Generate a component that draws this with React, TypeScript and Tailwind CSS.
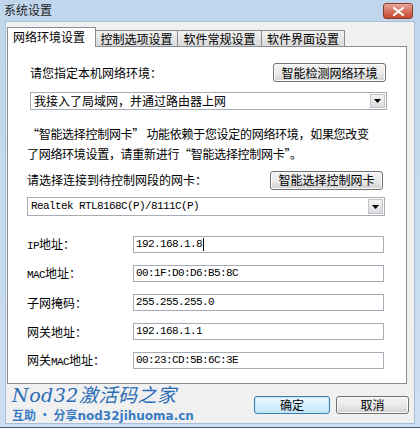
import React from 'react';

const cjk = "font-['Noto_Sans_CJK_SC','Noto_Sans',sans-serif]";
const mono = "font-['Liberation_Mono','Noto_Sans_CJK_SC',monospace]";

function WinButton({ children, className = '', primary = false }: { children: React.ReactNode; className?: string; primary?: boolean }) {
  return (
    <div
      className={`flex items-center justify-center rounded-[3px] border text-[12px] leading-none text-black ${
        primary
          ? 'border-[#3c7fb1] bg-gradient-to-b from-[#eaf6fd] via-[#d9f0fc] to-[#bee6fd] shadow-[inset_0_0_0_1px_#c4e5f6]'
          : 'border-[#707070] bg-gradient-to-b from-[#f2f2f2] via-[#ebebeb] to-[#d0d0d0] shadow-[inset_0_0_0_1px_#fcfcfc]'
      } ${className}`}
    >
      {children}
    </div>
  );
}

function Combo({ text, className = '', textClass = '' }: { text: string; className?: string; textClass?: string }) {
  return (
    <div className={`flex items-stretch border border-[#a5acb5] bg-white ${className}`}>
      <div className={`flex flex-1 items-center pl-[3px] whitespace-nowrap text-black ${textClass}`}>{text}</div>
      <div className="m-[1px] flex w-[15px] items-center justify-center border border-[#bfc4cb] bg-gradient-to-b from-[#f4f4f4] to-[#dcdcdc]">
        <svg width="7" height="4" viewBox="0 0 7 4">
          <path d="M0 0h7L3.5 4z" fill="#000" />
        </svg>
      </div>
    </div>
  );
}

function Field({ label, value, caret = false }: { label: React.ReactNode; value: string; caret?: boolean }) {
  return (
    <div className="flex h-[17px] items-center">
      <div className="w-[106px] text-[12px] leading-none text-black">{label}</div>
      <div className={`flex h-[17px] w-[251px] items-center border border-[#a5acb5] bg-white pl-[2px] text-[11px] tracking-[-0.6px] text-black ${mono}`}>
        {value}
        {caret && <span className="ml-[1px] inline-block h-[13px] w-[1px] bg-black" />}
      </div>
    </div>
  );
}

const Lat = ({ children }: { children: React.ReactNode }) => (
  <span className={`text-[11px] tracking-[-0.6px] ${mono}`}>{children}</span>
);

const tabs = [
  { label: '网络环境设置', w: 'w-[89px]' },
  { label: '控制选项设置', w: 'w-[82px]' },
  { label: '软件常规设置', w: 'w-[84px]' },
  { label: '软件界面设置', w: 'w-[83px]' },
];

export default function App() {
  return (
    <div className={`flex h-[430px] w-[420px] flex-col bg-gradient-to-b from-[#c0d6ec] to-[#cde0f2] ${cjk}`}>
      <div className="flex h-[22px] shrink-0 items-start justify-between pl-[4px] pr-[7px]">
        <span className="mt-[4px] text-[12px] leading-none text-[#1e1e1e]">系统设置</span>
        <div className="mt-[3px] flex h-[16px] w-[30px] items-center justify-center rounded-[3px] border border-[#8d3a2d] bg-gradient-to-b from-[#e6a89b] via-[#d5735f] to-[#c4472f]">
          <svg width="11" height="9" viewBox="0 0 11 9">
            <path d="M1 1l9 7M10 1L1 8" stroke="#fff" strokeWidth="2.2" strokeLinecap="round" />
          </svg>
        </div>
      </div>

      <div className="mx-[6px] mb-[4px] flex flex-1 flex-col bg-[#f0f0f0] shadow-[0_0_0_1px_#a9bed6]">
        <div className="ml-[1px] flex h-[24px] shrink-0 items-end pt-[5px]">
          {tabs.map((t, i) =>
            i === 0 ? (
              <div
                key={t.label}
                className={`relative z-10 -mb-[1px] flex h-[20px] ${t.w} items-start border border-b-0 border-[#898c95] bg-white pl-[5px] pt-[3px] text-[12px] leading-none text-black`}
              >
                {t.label}
              </div>
            ) : (
              <div
                key={t.label}
                className={`flex h-[16px] ${t.w} items-center justify-center border border-b-0 border-l-0 border-[#898c95] bg-gradient-to-b from-[#f2f2f2] to-[#dadada] text-[12px] leading-none text-black`}
              >
                {t.label}
              </div>
            )
          )}
        </div>

        <div className="ml-[1px] flex h-[338px] w-[400px] flex-col border border-[#898c95] bg-white pl-[19px] text-[12px] text-black">
          <div className="ml-[3px] mt-[16px] flex h-[19px] items-center justify-between pr-[20px]">
            <span className="leading-none">请您指定本机网络环境：</span>
            <WinButton className="h-[19px] w-[113px]">智能检测网络环境</WinButton>
          </div>
          <Combo text="我接入了局域网，并通过路由器上网" className="ml-[3px] mt-[10px] h-[18px] w-[357px]" textClass="text-[12px]" />

          <div className="mt-[14px] flex flex-col whitespace-nowrap text-[12px] tracking-[-0.3px]">
            <span className="h-[20px] leading-[20px]">“智能选择控制网卡” 功能依赖于您设定的网络环境，如果您改变</span>
            <span className="h-[20px] leading-[20px]">了网络环境设置，请重新进行“智能选择控制网卡”。</span>
          </div>

          <div className="mt-[7px] flex h-[18px] items-center justify-between pr-[23px]">
            <span className="leading-none">请选择连接到待控制网段的网卡：</span>
            <WinButton className="h-[19px] w-[113px]">智能选择控制网卡</WinButton>
          </div>
          <Combo
            text="Realtek RTL8168C(P)/8111C(P)"
            className="mt-[8px] h-[19px] w-[358px]"
            textClass={`text-[11px] tracking-[-0.6px] ${mono}`}
          />

          <div className="mt-[20px] flex flex-col gap-[12px]">
            <Field label={<><Lat>IP</Lat>地址：</>} value="192.168.1.8" caret />
            <Field label={<><Lat>MAC</Lat>地址：</>} value="00:1F:D0:D6:B5:8C" />
            <Field label="子网掩码：" value="255.255.255.0" />
            <Field label="网关地址：" value="192.168.1.1" />
            <Field label={<>网关<Lat>MAC</Lat>地址：</>} value="00:23:CD:5B:6C:3E" />
          </div>
        </div>

        <div className="flex flex-1 items-start justify-between pl-[6px] pr-[5px]">
          <div className="flex flex-col">
            <span className="-mt-[1px] text-[19px] italic leading-[24px] tracking-[0.5px] text-[#2a6cb5] font-['DejaVu_Serif','Noto_Sans_CJK_SC',serif]">
              Nod32激活码之家
            </span>
            <span className="mt-[1px] text-[12px] font-bold leading-[14px] text-[#3a7cc4]">
              互助 · 分享<span className="font-['DejaVu_Sans',sans-serif]">nod32jihuoma.cn</span>
            </span>
          </div>
          <div className="mt-[12px] flex gap-[6px]">
            <WinButton primary className="h-[18px] w-[76px]">确定</WinButton>
            <WinButton className="h-[18px] w-[73px]">取消</WinButton>
          </div>
        </div>
      </div>
      <div className="h-[1px] shrink-0 bg-[#3a5a7c]" />
      <div className="h-[4px] shrink-0 bg-white" />
    </div>
  );
}
